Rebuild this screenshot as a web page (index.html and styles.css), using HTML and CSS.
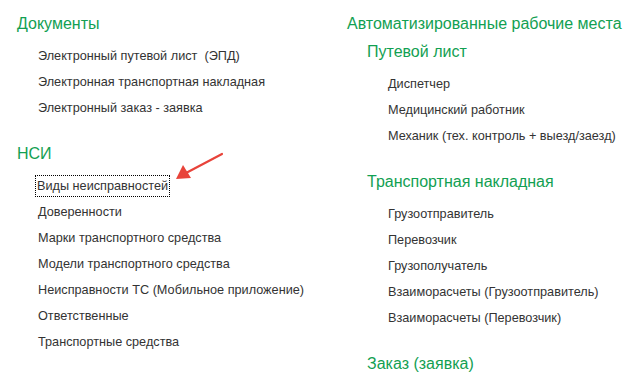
FILE: index.html
```html
<!DOCTYPE html>
<html lang="ru">
<head>
<meta charset="utf-8">
<title>Разделы</title>
<link rel="stylesheet" href="styles.css">
</head>
<body>
<div class="page">
    <div class="column left">
        <div class="group">
            <h2>Документы</h2>
            <ul class="links">
                <li><a href="#">Электронный путевой лист &nbsp;(ЭПД)</a></li>
                <li><a href="#">Электронная транспортная накладная</a></li>
                <li><a href="#">Электронный заказ - заявка</a></li>
            </ul>
        </div>
        <div class="group">
            <h2>НСИ</h2>
            <ul class="links">
                <li class="focused"><a href="#">Виды неисправностей</a>
                    <svg class="pointer" width="60" height="40" viewBox="0 0 60 40">
                        <line x1="50" y1="2" x2="14" y2="21" stroke="#e8433a" stroke-width="2.2" stroke-linecap="round"/>
                        <polygon points="4,27 11,13 19,26" fill="#e8433a"/>
                    </svg>
                </li>
                <li><a href="#">Доверенности</a></li>
                <li><a href="#">Марки транспортного средства</a></li>
                <li><a href="#">Модели транспортного средства</a></li>
                <li><a href="#">Неисправности ТС (Мобильное приложение)</a></li>
                <li><a href="#">Ответственные</a></li>
                <li><a href="#">Транспортные средства</a></li>
            </ul>
        </div>
    </div>
    <div class="column right">
        <h2>Автоматизированные рабочие места</h2>
        <div class="subgroup">
            <h2>Путевой лист</h2>
            <ul class="links">
                <li><a href="#">Диспетчер</a></li>
                <li><a href="#">Медицинский работник</a></li>
                <li><a href="#">Механик (тех. контроль + выезд/заезд)</a></li>
            </ul>
        </div>
        <div class="subgroup">
            <h2>Транспортная накладная</h2>
            <ul class="links">
                <li><a href="#">Грузоотправитель</a></li>
                <li><a href="#">Перевозчик</a></li>
                <li><a href="#">Грузополучатель</a></li>
                <li><a href="#">Взаиморасчеты (Грузоотправитель)</a></li>
                <li><a href="#">Взаиморасчеты (Перевозчик)</a></li>
            </ul>
        </div>
        <div class="subgroup">
            <h2>Заказ (заявка)</h2>
        </div>
    </div>
</div>
</body>
</html>
```

FILE: styles.css
```css
body {
    margin: 0;
    background: #fff;
    font-family: "Liberation Sans", Arial, sans-serif;
    color: #333;
    overflow: hidden;
}

.page {
    display: flex;
    padding: 13px 0 0 17px;
}

.column.left {
    flex: none;
    width: 330px;
}

.column.right {
    flex: none;
}

h2 {
    margin: 0;
    font-size: 16px;
    font-weight: normal;
    line-height: 22px;
    color: #12a052;
}

.links {
    list-style: none;
    margin: 11px 0 25px;
    padding: 0 0 0 21px;
}

.links li {
    position: relative;
    height: 20px;
    margin-bottom: 6px;
}

.links a {
    display: inline-block;
    font-size: 12.7px;
    line-height: 20px;
    color: #333;
    text-decoration: none;
}

.focused a {
    outline: 1px dotted #000;
    padding: 0 1px;
    margin-left: -2px;
}

.pointer {
    position: absolute;
    left: 134px;
    top: -24px;
}

.subgroup {
    margin-top: 6px;
    padding-left: 20px;
}
```
